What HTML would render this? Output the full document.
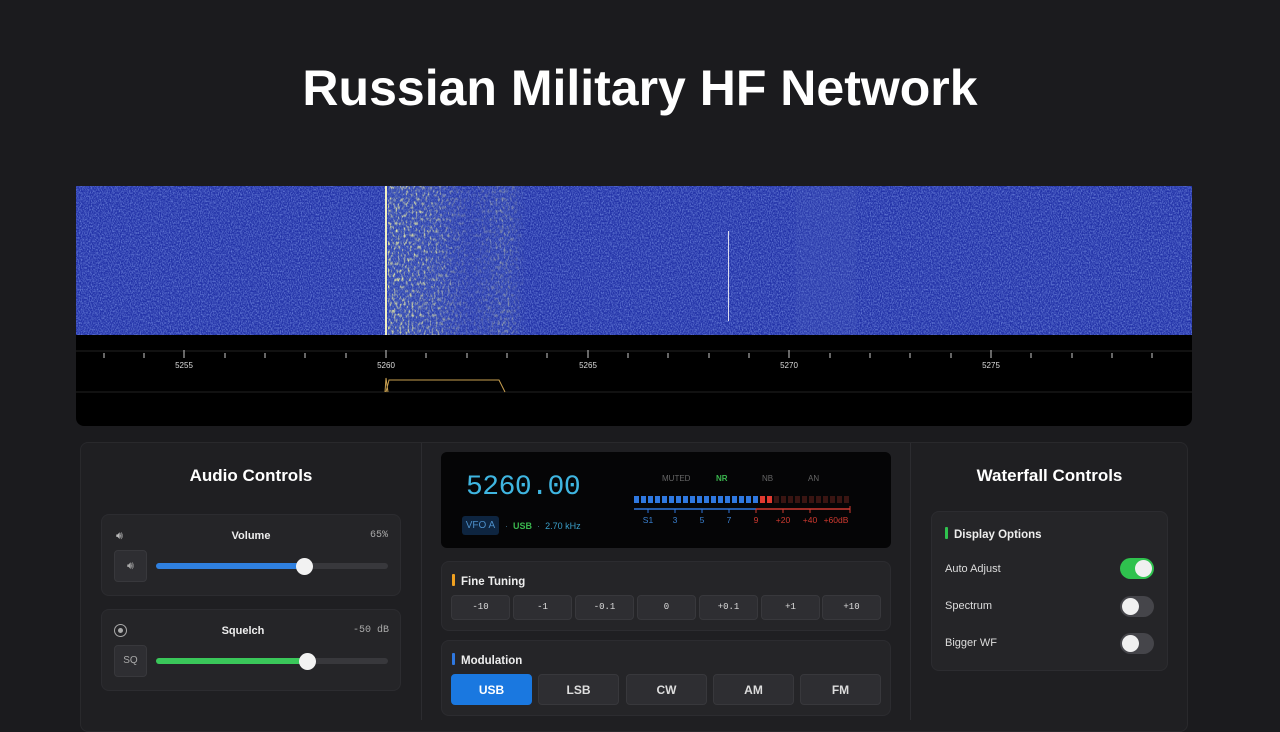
<!DOCTYPE html>
<html><head><meta charset="utf-8"><style>
*{box-sizing:border-box;margin:0;padding:0}
body{width:1280px;height:720px;background:#1b1b1e;font-family:"Liberation Sans",sans-serif;color:#ddd;position:relative;overflow:hidden}
.abs{position:absolute}
h1{position:absolute;left:0;width:1280px;top:59px;text-align:center;font-size:50px;font-weight:bold;color:#fff}
.card{position:absolute;background:#252528;border-radius:8px;border:1px solid #2c2c30}
.mono{font-family:"Liberation Mono",monospace}
.btn{position:absolute;background:#2e2e32;border:1px solid #38383c;border-radius:4px;text-align:center;color:#ddd}
.tog{position:absolute;width:34px;height:21px;border-radius:11px;background:#45454a}
.tog i{position:absolute;top:2px;left:2px;width:17px;height:17px;border-radius:50%;background:#f0f0f0}
.on{background:#2fc24e}.on i{left:15px}
.bar{display:inline-block;width:3px;height:12px;border-radius:1px;margin-right:6px;vertical-align:-1px}
</style></head><body>
<h1>Russian Military HF Network</h1>
<div class="abs" style="left:76px;top:186px;width:1116px;height:240px;background:#000;border-radius:0 0 8px 8px;overflow:hidden">
<svg width="1116" height="240" style="position:absolute;left:0;top:0">
<defs>
<filter id="n" x="0" y="0" width="100%" height="100%"><feTurbulence type="fractalNoise" baseFrequency="0.9 0.6" numOctaves="2" seed="3"/><feColorMatrix values="0 0 0 0 0.35  0 0 0 0 0.5  0 0 0 0 1  0 0 0 1.2 -0.45"/></filter>
<filter id="y" x="0" y="0" width="100%" height="100%"><feTurbulence type="fractalNoise" baseFrequency="0.5 0.25" numOctaves="2" seed="7"/><feColorMatrix values="0 0 0 0 0.9  0 0 0 0 0.9  0 0 0 0 0.35  0 0 0 3 -1.5"/></filter>
<linearGradient id="g" x1="0" x2="1"><stop offset="0" stop-color="#fff" stop-opacity="1"/><stop offset="0.35" stop-color="#fff" stop-opacity=".7"/><stop offset="0.6" stop-color="#fff" stop-opacity=".15"/><stop offset="0.85" stop-color="#fff" stop-opacity=".5"/><stop offset="1" stop-color="#fff" stop-opacity="0"/></linearGradient>
<mask id="m"><rect x="312" y="0" width="138" height="149" fill="url(#g)"/></mask>
</defs>
<rect width="1116" height="149" fill="#2333a8"/>
<rect width="1116" height="149" filter="url(#n)"/>
<rect x="312" y="0" width="138" height="149" fill="#4a68b8" opacity=".35" mask="url(#m)"/>
<rect x="312" y="0" width="138" height="149" filter="url(#y)" mask="url(#m)"/>
<rect x="309" y="0" width="2" height="149" fill="#f0f0c0"/>
<rect x="652" y="45" width="1" height="90" fill="#dde"/>
<rect x="720" y="0" width="60" height="149" fill="#4c60c0" opacity=".2"/>
<line x1="0" y1="165" x2="1116" y2="165" stroke="#222"/>
<line x1="0" y1="206" x2="1116" y2="206" stroke="#222"/>
<g stroke="#ccc" stroke-width="1">
<line x1="28" y1="167" x2="28" y2="172"/><line x1="68" y1="167" x2="68" y2="172"/><line x1="108" y1="164" x2="108" y2="172"/><line x1="149" y1="167" x2="149" y2="172"/><line x1="189" y1="167" x2="189" y2="172"/><line x1="229" y1="167" x2="229" y2="172"/><line x1="270" y1="167" x2="270" y2="172"/><line x1="310" y1="164" x2="310" y2="172"/><line x1="350" y1="167" x2="350" y2="172"/><line x1="391" y1="167" x2="391" y2="172"/><line x1="431" y1="167" x2="431" y2="172"/><line x1="471" y1="167" x2="471" y2="172"/><line x1="512" y1="164" x2="512" y2="172"/><line x1="552" y1="167" x2="552" y2="172"/><line x1="592" y1="167" x2="592" y2="172"/><line x1="633" y1="167" x2="633" y2="172"/><line x1="673" y1="167" x2="673" y2="172"/><line x1="713" y1="164" x2="713" y2="172"/><line x1="754" y1="167" x2="754" y2="172"/><line x1="794" y1="167" x2="794" y2="172"/><line x1="834" y1="167" x2="834" y2="172"/><line x1="875" y1="167" x2="875" y2="172"/><line x1="915" y1="164" x2="915" y2="172"/><line x1="955" y1="167" x2="955" y2="172"/><line x1="996" y1="167" x2="996" y2="172"/><line x1="1036" y1="167" x2="1036" y2="172"/><line x1="1076" y1="167" x2="1076" y2="172"/>
</g>
<g fill="#ddd" font-size="8" font-family="Liberation Sans" text-anchor="middle"><text x="108" y="182">5255</text><text x="310" y="182">5260</text><text x="512" y="182">5265</text><text x="713" y="182">5270</text><text x="915" y="182">5275</text></g>
<path d="M309 206 L310 192 L312 206 M310 206 L313 194 L423 194 L429 206" stroke="#c9a050" fill="none"/>
</svg></div>

<div class="abs" style="left:80px;top:442px;width:1108px;height:290px;background:#1f1f22;border:1px solid #29292c;border-radius:8px"></div>
<div class="abs" style="left:421px;top:443px;width:1px;height:277px;background:#2c2c30"></div>
<div class="abs" style="left:910px;top:443px;width:1px;height:277px;background:#2c2c30"></div>

<div class="abs" style="left:80px;top:466px;width:342px;text-align:center;font-size:17px;font-weight:bold;color:#fff">Audio Controls</div>
<div class="card" style="left:101px;top:514px;width:300px;height:82px"></div>
<div class="abs" style="left:116px;top:530px;font-size:11px;color:#bbb">🔊︎</div>
<div class="abs" style="left:101px;top:530px;width:300px;text-align:center;font-size:11px;font-weight:bold;color:#eee">Volume</div>
<div class="abs mono" style="left:370px;top:530px;font-size:10px;color:#aaa">65%</div>
<div class="btn" style="left:114px;top:550px;width:33px;height:32px;line-height:30px;font-size:11px;color:#aaa">🔊︎</div>
<div class="abs" style="left:156px;top:563px;width:232px;height:6px;border-radius:3px;background:#38383c"></div>
<div class="abs" style="left:156px;top:563px;width:148px;height:6px;border-radius:3px;background:#2f80e0"></div>
<div class="abs" style="left:296px;top:558px;width:17px;height:17px;border-radius:50%;background:#f2f2f2"></div>

<div class="card" style="left:101px;top:609px;width:300px;height:82px"></div>
<div class="abs" style="left:114px;top:624px;width:13px;height:13px;border:1.5px solid #aaa;border-radius:50%"></div>
<div class="abs" style="left:118px;top:628px;width:5px;height:5px;background:#aaa;border-radius:50%"></div>
<div class="abs" style="left:93px;top:625px;width:300px;text-align:center;font-size:11px;font-weight:bold;color:#eee">Squelch</div>
<div class="abs mono" style="left:353px;top:625px;font-size:10px;color:#aaa">-50 dB</div>
<div class="btn" style="left:114px;top:645px;width:33px;height:32px;line-height:30px;font-size:10px;color:#aaa">SQ</div>
<div class="abs" style="left:156px;top:658px;width:232px;height:6px;border-radius:3px;background:#38383c"></div>
<div class="abs" style="left:156px;top:658px;width:152px;height:6px;border-radius:3px;background:#3ac75a"></div>
<div class="abs" style="left:299px;top:653px;width:17px;height:17px;border-radius:50%;background:#f2f2f2"></div>

<div class="abs" style="left:441px;top:452px;width:450px;height:96px;background:#050506;border-radius:6px"></div>
<div class="abs mono" style="left:466px;top:472px;font-size:28px;color:#3fb5e0;letter-spacing:-0.5px">5260.00</div>
<div class="abs" style="left:462px;top:516px;width:37px;height:19px;background:#0e2540;border-radius:3px;font-size:10px;color:#4c8ec8;line-height:19px;text-align:center">VFO A</div>
<div class="abs" style="left:505px;top:521px;font-size:9px;color:#6a8"><span style="color:#3a6a80">·</span>&nbsp;&nbsp;<b style="color:#3ab64e">USB</b>&nbsp;&nbsp;<span style="color:#3a6a80">·</span>&nbsp;&nbsp;<span style="color:#3a9ec8">2.70 kHz</span></div>
<div class="abs" style="left:662px;top:474px;font-size:8px;color:#666">MUTED</div>
<div class="abs" style="left:716px;top:474px;font-size:8px;color:#3ab64e;font-weight:bold">NR</div>
<div class="abs" style="left:762px;top:474px;font-size:8px;color:#666">NB</div>
<div class="abs" style="left:808px;top:474px;font-size:8px;color:#666">AN</div>
<svg class="abs" style="left:630px;top:494px" width="230" height="32">
<g fill="#2f78e0"><rect x="4" y="2" width="5" height="7"/><rect x="11" y="2" width="5" height="7"/><rect x="18" y="2" width="5" height="7"/><rect x="25" y="2" width="5" height="7"/><rect x="32" y="2" width="5" height="7"/><rect x="39" y="2" width="5" height="7"/><rect x="46" y="2" width="5" height="7"/><rect x="53" y="2" width="5" height="7"/><rect x="60" y="2" width="5" height="7"/><rect x="67" y="2" width="5" height="7"/><rect x="74" y="2" width="5" height="7"/><rect x="81" y="2" width="5" height="7"/><rect x="88" y="2" width="5" height="7"/><rect x="95" y="2" width="5" height="7"/><rect x="102" y="2" width="5" height="7"/><rect x="109" y="2" width="5" height="7"/><rect x="116" y="2" width="5" height="7"/><rect x="123" y="2" width="5" height="7"/></g>
<g fill="#e03a30"><rect x="130" y="2" width="5" height="7"/><rect x="137" y="2" width="5" height="7"/></g>
<g fill="#3a1512"><rect x="144" y="2" width="5" height="7"/><rect x="151" y="2" width="5" height="7"/><rect x="158" y="2" width="5" height="7"/><rect x="165" y="2" width="5" height="7"/><rect x="172" y="2" width="5" height="7"/><rect x="179" y="2" width="5" height="7"/><rect x="186" y="2" width="5" height="7"/><rect x="193" y="2" width="5" height="7"/><rect x="200" y="2" width="5" height="7"/><rect x="207" y="2" width="5" height="7"/><rect x="214" y="2" width="5" height="7"/></g>
<line x1="4" y1="15" x2="126" y2="15" stroke="#2f78e0" stroke-width="1.5"/><line x1="126" y1="15" x2="220" y2="15" stroke="#d03a30" stroke-width="1.5"/>
<g stroke-width="1"><g stroke="#2f78e0"><line x1="18" y1="15" x2="18" y2="19"/><line x1="45" y1="15" x2="45" y2="19"/><line x1="72" y1="15" x2="72" y2="19"/><line x1="99" y1="15" x2="99" y2="19"/></g><g stroke="#d03a30"><line x1="126" y1="15" x2="126" y2="19"/><line x1="153" y1="15" x2="153" y2="19"/><line x1="180" y1="15" x2="180" y2="19"/><line x1="220" y1="12" x2="220" y2="19"/></g></g>
<g font-size="8.5" font-family="Liberation Sans" text-anchor="middle"><g fill="#3a80d0"><text x="18" y="29">S1</text><text x="45" y="29">3</text><text x="72" y="29">5</text><text x="99" y="29">7</text></g><g fill="#d03a30"><text x="126" y="29">9</text><text x="153" y="29">+20</text><text x="180" y="29">+40</text><text x="206" y="29">+60dB</text></g></g>
</svg>

<div class="card" style="left:441px;top:561px;width:450px;height:70px"></div>
<div class="abs" style="left:452px;top:574px;font-size:11.5px;font-weight:bold;color:#eee"><span class="bar" style="background:#f0a020"></span>Fine Tuning</div>
<div class="btn mono" style="left:451px;top:595px;width:59px;height:25px;line-height:23px;font-size:9px">-10</div>
<div class="btn mono" style="left:513px;top:595px;width:59px;height:25px;line-height:23px;font-size:9px">-1</div>
<div class="btn mono" style="left:575px;top:595px;width:59px;height:25px;line-height:23px;font-size:9px">-0.1</div>
<div class="btn mono" style="left:637px;top:595px;width:59px;height:25px;line-height:23px;font-size:9px">0</div>
<div class="btn mono" style="left:699px;top:595px;width:59px;height:25px;line-height:23px;font-size:9px">+0.1</div>
<div class="btn mono" style="left:761px;top:595px;width:59px;height:25px;line-height:23px;font-size:9px">+1</div>
<div class="btn mono" style="left:822px;top:595px;width:59px;height:25px;line-height:23px;font-size:9px">+10</div>

<div class="card" style="left:441px;top:640px;width:450px;height:76px"></div>
<div class="abs" style="left:452px;top:653px;font-size:11.5px;font-weight:bold;color:#eee"><span class="bar" style="background:#2f78e0"></span>Modulation</div>
<div class="btn" style="left:451px;top:674px;width:81px;height:31px;line-height:30px;font-size:12px;font-weight:bold;background:#1a78e0;border-color:#1a78e0;color:#fff">USB</div>
<div class="btn" style="left:538px;top:674px;width:81px;height:31px;line-height:30px;font-size:12px;font-weight:bold">LSB</div>
<div class="btn" style="left:626px;top:674px;width:81px;height:31px;line-height:30px;font-size:12px;font-weight:bold">CW</div>
<div class="btn" style="left:713px;top:674px;width:81px;height:31px;line-height:30px;font-size:12px;font-weight:bold">AM</div>
<div class="btn" style="left:800px;top:674px;width:81px;height:31px;line-height:30px;font-size:12px;font-weight:bold">FM</div>

<div class="abs" style="left:911px;top:466px;width:277px;text-align:center;font-size:17px;font-weight:bold;color:#fff">Waterfall Controls</div>
<div class="card" style="left:931px;top:511px;width:237px;height:160px"></div>
<div class="abs" style="left:945px;top:527px;font-size:11.5px;font-weight:bold;color:#eee"><span class="bar" style="background:#2fc24e"></span>Display Options</div>
<div class="abs" style="left:945px;top:563px;font-size:11px;color:#ddd">Auto Adjust</div>
<div class="tog on" style="left:1120px;top:558px"><i></i></div>
<div class="abs" style="left:945px;top:600px;font-size:11px;color:#ddd">Spectrum</div>
<div class="tog" style="left:1120px;top:596px"><i></i></div>
<div class="abs" style="left:945px;top:637px;font-size:11px;color:#ddd">Bigger WF</div>
<div class="tog" style="left:1120px;top:633px"><i></i></div>
</body></html>
